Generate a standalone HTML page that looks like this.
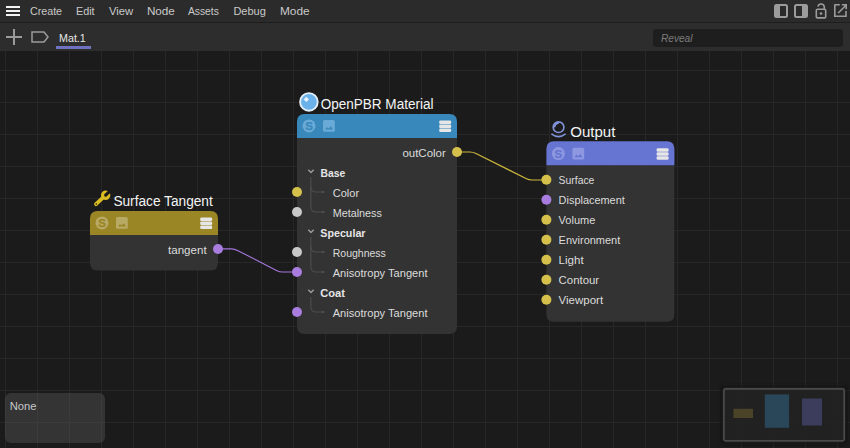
<!DOCTYPE html><html><head><meta charset="utf-8"><style>html,body{margin:0;padding:0;background:#1b1b1b;overflow:hidden;width:850px;height:448px}svg{display:block}text{font-family:"Liberation Sans", sans-serif}</style></head><body>
<svg width="850" height="448" viewBox="0 0 850 448">
<rect x="0" y="0" width="850" height="448" fill="#1b1b1b"/>
<path d="M5.5 51V448 M37.5 51V448 M69.5 51V448 M101.5 51V448 M133.5 51V448 M165.5 51V448 M197.5 51V448 M229.5 51V448 M261.5 51V448 M293.5 51V448 M325.5 51V448 M357.5 51V448 M389.5 51V448 M421.5 51V448 M453.5 51V448 M485.5 51V448 M517.5 51V448 M549.5 51V448 M581.5 51V448 M613.5 51V448 M645.5 51V448 M677.5 51V448 M709.5 51V448 M741.5 51V448 M773.5 51V448 M805.5 51V448 M837.5 51V448 M0 70.5H850 M0 102.5H850 M0 134.5H850 M0 166.5H850 M0 198.5H850 M0 230.5H850 M0 262.5H850 M0 294.5H850 M0 326.5H850 M0 358.5H850 M0 390.5H850 M0 422.5H850" stroke="#272727" stroke-width="1" fill="none" shape-rendering="crispEdges"/>
<rect x="0" y="0" width="850" height="22" fill="#2b2b2b"/>
<rect x="0" y="22" width="850" height="1" fill="#1e1e1e"/>
<rect x="0" y="23" width="850" height="28" fill="#2d2d2d"/>
<rect x="6" y="6" width="14" height="2" fill="#f2f2f2"/><rect x="6" y="10" width="14" height="2" fill="#f2f2f2"/><rect x="6" y="14" width="14" height="2" fill="#f2f2f2"/>
<text x="29.9" y="15" font-size="11.5" fill="#c9c9c9" text-anchor="start" font-weight="normal" font-style="normal" textLength="32.2" lengthAdjust="spacingAndGlyphs">Create</text>
<text x="75.9" y="15" font-size="11.5" fill="#c9c9c9" text-anchor="start" font-weight="normal" font-style="normal" textLength="18.7" lengthAdjust="spacingAndGlyphs">Edit</text>
<text x="108.9" y="15" font-size="11.5" fill="#c9c9c9" text-anchor="start" font-weight="normal" font-style="normal" textLength="24.2" lengthAdjust="spacingAndGlyphs">View</text>
<text x="146.9" y="15" font-size="11.5" fill="#c9c9c9" text-anchor="start" font-weight="normal" font-style="normal" textLength="28.0" lengthAdjust="spacingAndGlyphs">Node</text>
<text x="187.9" y="15" font-size="11.5" fill="#c9c9c9" text-anchor="start" font-weight="normal" font-style="normal" textLength="31.0" lengthAdjust="spacingAndGlyphs">Assets</text>
<text x="233.4" y="15" font-size="11.5" fill="#c9c9c9" text-anchor="start" font-weight="normal" font-style="normal" textLength="32.5" lengthAdjust="spacingAndGlyphs">Debug</text>
<text x="279.9" y="15" font-size="11.5" fill="#c9c9c9" text-anchor="start" font-weight="normal" font-style="normal" textLength="29.7" lengthAdjust="spacingAndGlyphs">Mode</text>
<rect x="775" y="5" width="12" height="12" rx="1.5" fill="none" stroke="#9b9b9b" stroke-width="2"/><rect x="775" y="5" width="5" height="12" fill="#9b9b9b"/>
<rect x="795" y="5" width="12" height="12" rx="1.5" fill="none" stroke="#9b9b9b" stroke-width="2"/><rect x="802" y="5" width="5" height="12" fill="#9b9b9b"/>
<rect x="816.3" y="9.3" width="9.4" height="8.6" rx="1.2" fill="none" stroke="#9b9b9b" stroke-width="1.6"/><circle cx="821" cy="13.5" r="1.35" fill="#9b9b9b"/><path d="M818 6.6 A3.2 3.2 0 0 1 824.3 6.8 V9.3" fill="none" stroke="#9b9b9b" stroke-width="1.6"/>
<path d="M839.8 4.8 H835 Q834.8 4.8 834.8 5 V16.2 H846 V11" fill="none" stroke="#9b9b9b" stroke-width="1.6"/><path d="M838.2 13 L846 5.2 M841.8 4.8 H846.2 V9.2" fill="none" stroke="#9b9b9b" stroke-width="1.6"/>
<rect x="6" y="36" width="16" height="2" fill="#9b9b9b"/><rect x="13" y="29" width="2" height="16" fill="#9b9b9b"/>
<path d="M32 32 H44 L48 37 L44 42 H32 Z" fill="none" stroke="#9b9b9b" stroke-width="1.5" stroke-linejoin="miter"/>
<text x="59" y="42" font-size="11" fill="#e6e6e6" text-anchor="start" font-weight="normal" font-style="normal" textLength="26.8" lengthAdjust="spacingAndGlyphs">Mat.1</text>
<rect x="56" y="46" width="35" height="3" fill="#6f72c0"/>
<rect x="653" y="29" width="190" height="18" rx="3" fill="#1e1e1e"/>
<text x="661" y="42" font-size="11" fill="#7c7c7c" text-anchor="start" font-weight="normal" font-style="italic" textLength="31.5" lengthAdjust="spacingAndGlyphs">Reveal</text>
<path d="M457 152 H470 Q473 152 476 153.5 L526 178.5 Q529 180 532 180 H546" fill="none" stroke="#cdb83f" stroke-width="1.15"/>
<path d="M218 248.8 H231.5 Q234.5 248.8 237.5 250.4 L276.5 270.4 Q279.5 272 282.5 272 H297" fill="none" stroke="#a376da" stroke-width="1.15"/>
<path d="M297 138 H457 V326.5 Q457 334 449.5 334 H304.5 Q297 334 297 326.5 Z" fill="rgba(53,53,53,0.93)"/>
<path d="M297 138 V121.5 Q297 114 304.5 114 H449.5 Q457 114 457 121.5 V138 Z" fill="#3888bc"/>
<circle cx="309" cy="125.9" r="6.5" fill="#6aaad6"/>
<text x="309" y="130.0" font-size="11.5" font-weight="bold" fill="#3888bc" stroke="#3888bc" stroke-width="0.25" text-anchor="middle">S</text>
<rect x="323" y="120" width="11.8" height="11.8" rx="1.6" fill="#6aaad6"/>
<path d="M325.2 129.5 L326.9 126.9 L328.6 128.6 L331.1 126.2 L332.8 129.5 Z" fill="#3888bc"/>
<rect x="439.2" y="120.6" width="12" height="3.4" rx="1.3" fill="#e6e6e6"/>
<rect x="439.2" y="124.6" width="12" height="3.4" rx="1.3" fill="#e6e6e6"/>
<rect x="439.2" y="128.6" width="12" height="3.4" rx="1.3" fill="#e6e6e6"/>
<path d="M546.4 165.2 H674.4 V314.2 Q674.4 321.7 666.9 321.7 H553.9 Q546.4 321.7 546.4 314.2 Z" fill="rgba(53,53,53,0.93)"/>
<path d="M546.4 165.2 V148.7 Q546.4 141.2 553.9 141.2 H666.9 Q674.4 141.2 674.4 148.7 V165.2 Z" fill="#6675d2"/>
<circle cx="558.4" cy="153.6" r="6.5" fill="#8d98e0"/>
<text x="558.4" y="157.7" font-size="11.5" font-weight="bold" fill="#6675d2" stroke="#6675d2" stroke-width="0.25" text-anchor="middle">S</text>
<rect x="572.4" y="147.7" width="11.8" height="11.8" rx="1.6" fill="#8d98e0"/>
<path d="M574.6 157.2 L576.3 154.6 L578.0 156.29999999999998 L580.5 153.89999999999998 L582.1999999999999 157.2 Z" fill="#6675d2"/>
<rect x="656.6" y="148.29999999999998" width="12" height="3.4" rx="1.3" fill="#e6e6e6"/>
<rect x="656.6" y="152.29999999999998" width="12" height="3.4" rx="1.3" fill="#e6e6e6"/>
<rect x="656.6" y="156.29999999999998" width="12" height="3.4" rx="1.3" fill="#e6e6e6"/>
<path d="M90 235 H218 V263.0 Q218 270.5 210.5 270.5 H97.5 Q90 270.5 90 263.0 Z" fill="rgba(53,53,53,0.93)"/>
<path d="M90 235 V218.5 Q90 211 97.5 211 H210.5 Q218 211 218 218.5 V235 Z" fill="#9a8624"/>
<circle cx="102" cy="222.9" r="6.5" fill="#b8a964"/>
<text x="102" y="227.0" font-size="11.5" font-weight="bold" fill="#9a8624" stroke="#9a8624" stroke-width="0.25" text-anchor="middle">S</text>
<rect x="116" y="217" width="11.8" height="11.8" rx="1.6" fill="#b8a964"/>
<path d="M118.2 226.5 L119.9 223.9 L121.6 225.6 L124.1 223.2 L125.8 226.5 Z" fill="#9a8624"/>
<rect x="200.2" y="217.6" width="12" height="3.4" rx="1.3" fill="#e6e6e6"/>
<rect x="200.2" y="221.6" width="12" height="3.4" rx="1.3" fill="#e6e6e6"/>
<rect x="200.2" y="225.6" width="12" height="3.4" rx="1.3" fill="#e6e6e6"/>
<text x="320.7" y="108.8" font-size="14" fill="#f4f4f4" text-anchor="start" font-weight="normal" font-style="normal" textLength="112.8" lengthAdjust="spacingAndGlyphs">OpenPBR Material</text>
<text x="570.2" y="136.5" font-size="14" fill="#f4f4f4" text-anchor="start" font-weight="normal" font-style="normal" textLength="45.2" lengthAdjust="spacingAndGlyphs">Output</text>
<text x="113.4" y="205.9" font-size="14" fill="#f4f4f4" text-anchor="start" font-weight="normal" font-style="normal" textLength="99.4" lengthAdjust="spacingAndGlyphs">Surface Tangent</text>
<circle cx="308.9" cy="101.9" r="8.8" fill="#6cb2ea" stroke="#e4eef8" stroke-width="1.9"/><path d="M303.7 99.4 L306.3 96.8 L308.9 99.4 L306.3 102 Z" fill="#e8f3fc"/>
<circle cx="558.55" cy="127.2" r="5.35" fill="none" stroke="#8293dc" stroke-width="1.6"/><path d="M554.6 127.4 A4 4 0 0 1 558.8 123.2" fill="none" stroke="#8293dc" stroke-width="1.7"/><path d="M551.4 133.9 Q558.5 139.3 565.6 133.9" fill="none" stroke="#8293dc" stroke-width="1.6"/>
<mask id="wm"><rect x="-6" y="-9" width="28" height="18" fill="white"/><rect x="13.2" y="-1.55" width="9" height="3.1" fill="black"/><circle cx="13.2" cy="0" r="1.55" fill="black"/><circle cx="0.4" cy="0" r="0.75" fill="black"/></mask><g transform="translate(96 204.2) rotate(-43)"><g mask="url(#wm)" fill="#d9bb22"><rect x="0" y="-1.9" width="11" height="3.8"/><circle cx="0" cy="0" r="1.9"/><circle cx="13.2" cy="0" r="4.7"/></g></g>
<text x="445.8" y="156.8" font-size="11" fill="#dcdcdc" text-anchor="end" font-weight="normal" font-style="normal" textLength="43.4" lengthAdjust="spacingAndGlyphs">outColor</text>
<text x="320.59999999999997" y="176.8" font-size="11" fill="#e6e6e6" text-anchor="start" font-weight="bold" font-style="normal" textLength="24.8" lengthAdjust="spacingAndGlyphs">Base</text>
<text x="332.7" y="196.9" font-size="11" fill="#dcdcdc" text-anchor="start" font-weight="normal" font-style="normal" textLength="26.4" lengthAdjust="spacingAndGlyphs">Color</text>
<text x="332.7" y="216.6" font-size="11" fill="#dcdcdc" text-anchor="start" font-weight="normal" font-style="normal" textLength="49.2" lengthAdjust="spacingAndGlyphs">Metalness</text>
<text x="320.29999999999995" y="236.8" font-size="11" fill="#e6e6e6" text-anchor="start" font-weight="bold" font-style="normal" textLength="45.2" lengthAdjust="spacingAndGlyphs">Specular</text>
<text x="332.7" y="256.6" font-size="11" fill="#dcdcdc" text-anchor="start" font-weight="normal" font-style="normal" textLength="53.2" lengthAdjust="spacingAndGlyphs">Roughness</text>
<text x="332.7" y="276.8" font-size="11" fill="#dcdcdc" text-anchor="start" font-weight="normal" font-style="normal" textLength="94.8" lengthAdjust="spacingAndGlyphs">Anisotropy Tangent</text>
<text x="320.29999999999995" y="296.6" font-size="11" fill="#e6e6e6" text-anchor="start" font-weight="bold" font-style="normal" textLength="24.7" lengthAdjust="spacingAndGlyphs">Coat</text>
<text x="332.7" y="316.6" font-size="11" fill="#dcdcdc" text-anchor="start" font-weight="normal" font-style="normal" textLength="94.8" lengthAdjust="spacingAndGlyphs">Anisotropy Tangent</text>
<path d="M308.3 169.8 L311 172.5 L313.7 169.8" transform="translate(0 0)" fill="none" stroke="#9a9a9a" stroke-width="1.5"/>
<path d="M308.3 169.8 L311 172.5 L313.7 169.8" transform="translate(0 60)" fill="none" stroke="#9a9a9a" stroke-width="1.5"/>
<path d="M308.3 169.8 L311 172.5 L313.7 169.8" transform="translate(0 120)" fill="none" stroke="#9a9a9a" stroke-width="1.5"/>
<path d="M310.8 177 V206.5 Q310.8 212 316.3 212 H323" fill="none" stroke="#4e4e4e" stroke-width="1.1"/>
<path d="M310.8 186.5 Q310.8 192 316.3 192 H323" fill="none" stroke="#4e4e4e" stroke-width="1.1"/>
<circle cx="323.3" cy="192" r="1.25" fill="#4e4e4e"/>
<circle cx="323.3" cy="212" r="1.25" fill="#4e4e4e"/>
<path d="M310.8 237 V266.5 Q310.8 272 316.3 272 H323" fill="none" stroke="#4e4e4e" stroke-width="1.1"/>
<path d="M310.8 246.5 Q310.8 252 316.3 252 H323" fill="none" stroke="#4e4e4e" stroke-width="1.1"/>
<circle cx="323.3" cy="252" r="1.25" fill="#4e4e4e"/>
<circle cx="323.3" cy="272" r="1.25" fill="#4e4e4e"/>
<path d="M310.8 297 V306.5 Q310.8 312 316.3 312 H323" fill="none" stroke="#4e4e4e" stroke-width="1.1"/>
<circle cx="323.3" cy="312" r="1.25" fill="#4e4e4e"/>
<circle cx="457" cy="152" r="5" fill="#d4c04a"/>
<circle cx="297" cy="192" r="5" fill="#d4c04a"/>
<circle cx="297" cy="212" r="5" fill="#c8c8c8"/>
<circle cx="297" cy="252" r="5" fill="#c8c8c8"/>
<circle cx="297" cy="272" r="5" fill="#a87ddf"/>
<circle cx="297" cy="312" r="5" fill="#a87ddf"/>
<circle cx="546.4" cy="179.7" r="5" fill="#d4c04a"/>
<text x="558.5999999999999" y="184.1" font-size="11" fill="#dcdcdc" text-anchor="start" font-weight="normal" font-style="normal" textLength="35.8" lengthAdjust="spacingAndGlyphs">Surface</text>
<circle cx="546.4" cy="199.7" r="5" fill="#a87ddf"/>
<text x="558.5999999999999" y="204.1" font-size="11" fill="#dcdcdc" text-anchor="start" font-weight="normal" font-style="normal" textLength="66.2" lengthAdjust="spacingAndGlyphs">Displacement</text>
<circle cx="546.4" cy="219.7" r="5" fill="#d4c04a"/>
<text x="558.5999999999999" y="224.1" font-size="11" fill="#dcdcdc" text-anchor="start" font-weight="normal" font-style="normal" textLength="36.7" lengthAdjust="spacingAndGlyphs">Volume</text>
<circle cx="546.4" cy="239.7" r="5" fill="#d4c04a"/>
<text x="558.5999999999999" y="244.1" font-size="11" fill="#dcdcdc" text-anchor="start" font-weight="normal" font-style="normal" textLength="61.7" lengthAdjust="spacingAndGlyphs">Environment</text>
<circle cx="546.4" cy="259.7" r="5" fill="#d4c04a"/>
<text x="558.5999999999999" y="264.1" font-size="11" fill="#dcdcdc" text-anchor="start" font-weight="normal" font-style="normal" textLength="25.1" lengthAdjust="spacingAndGlyphs">Light</text>
<circle cx="546.4" cy="279.7" r="5" fill="#d4c04a"/>
<text x="558.5999999999999" y="284.1" font-size="11" fill="#dcdcdc" text-anchor="start" font-weight="normal" font-style="normal" textLength="40.5" lengthAdjust="spacingAndGlyphs">Contour</text>
<circle cx="546.4" cy="299.7" r="5" fill="#d4c04a"/>
<text x="558.5999999999999" y="304.1" font-size="11" fill="#dcdcdc" text-anchor="start" font-weight="normal" font-style="normal" textLength="44.5" lengthAdjust="spacingAndGlyphs">Viewport</text>
<text x="206.6" y="253.7" font-size="11" fill="#dcdcdc" text-anchor="end" font-weight="normal" font-style="normal" textLength="38.6" lengthAdjust="spacingAndGlyphs">tangent</text>
<circle cx="218" cy="249" r="5" fill="#a87ddf"/>
<rect x="5" y="393" width="100" height="50" rx="6" fill="rgba(85,85,85,0.45)"/>
<text x="9.700000000000001" y="409.7" font-size="11" fill="#c8c8c8" text-anchor="start" font-weight="normal" font-style="normal" textLength="26.8" lengthAdjust="spacingAndGlyphs">None</text>
<filter id="mmb" x="-10%" y="-20%" width="120%" height="140%"><feGaussianBlur stdDeviation="1.2"/></filter><rect x="721" y="386" width="126" height="57.5" rx="3" fill="none" stroke="#151515" stroke-width="2.2" filter="url(#mmb)"/>
<rect x="723.9" y="388.8" width="120.3" height="52" rx="1.6" fill="rgba(35,35,35,0.86)" stroke="#4a4a4a" stroke-width="1.7"/>
<rect x="733.5" y="408.8" width="19.5" height="9.2" fill="#4a4327"/>
<rect x="764.8" y="394.4" width="24.3" height="33.4" fill="#2a4659"/>
<rect x="802" y="398.5" width="20" height="27" fill="#3c3d5d"/>
</svg></body></html>
